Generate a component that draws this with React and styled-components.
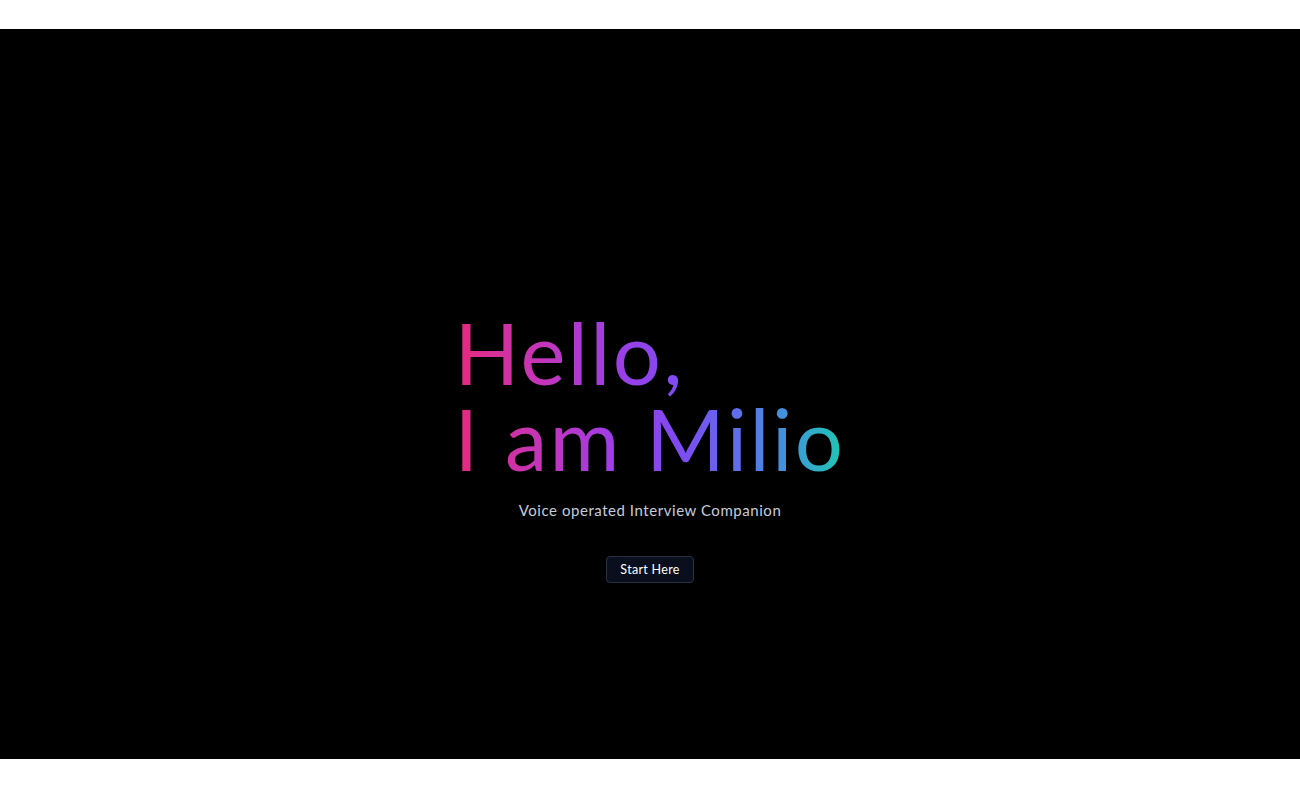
import React from "react";
import styled, { createGlobalStyle } from "styled-components";

const Global = createGlobalStyle`
  html, body { margin: 0; padding: 0; background: #ffffff; }
  body { font-family: "Lato", "Inter", sans-serif; }
  * { box-sizing: border-box; }
`;

const Page = styled.div`
  width: 100%;
  height: 788px;
  display: flex;
  align-items: center;
  justify-content: center;
  background: #ffffff;
`;

const Stage = styled.main`
  width: 100%;
  height: 730px;
  background: #000000;
  display: flex;
  flex-direction: column;
  align-items: center;
  padding-top: 280px;
`;

const Heading = styled.h1`
  margin: 0;
  font-family: "Lato", sans-serif;
  font-weight: 400;
  font-size: 85px;
  line-height: 86px;
  letter-spacing: 2.4px;
  text-align: left;
  background: linear-gradient(
    90deg,
    #e52a7d 0%,
    #c834b4 20%,
    #a03de6 40%,
    #7d4cf2 58%,
    #5a72ea 74%,
    #3f97d8 86%,
    #1ccab2 100%
  );
  -webkit-background-clip: text;
  background-clip: text;
  color: transparent;
  -webkit-text-fill-color: transparent;
`;

const Subtitle = styled.p`
  margin: 20px 0 0;
  font-family: "Lato", sans-serif;
  font-size: 15px;
  letter-spacing: 0.55px;
  color: #c6ccdb;
`;

const StartButton = styled.button`
  margin-top: 37px;
  width: 88px;
  height: 27px;
  padding: 0;
  background: #0a0f1d;
  border: 1px solid #283042;
  border-radius: 4px;
  color: #ffffff;
  font-family: "Lato", sans-serif;
  font-size: 12.5px;
  font-weight: 400;
  letter-spacing: 0.3px;
  cursor: pointer;
`;

export default function App() {
  return (
    <>
      <Global />
      <Page>
        <Stage>
          <Heading>
            Hello,
            <br />
            I am Milio
          </Heading>
          <Subtitle>Voice operated Interview Companion</Subtitle>
          <StartButton>Start Here</StartButton>
        </Stage>
      </Page>
    </>
  );
}
